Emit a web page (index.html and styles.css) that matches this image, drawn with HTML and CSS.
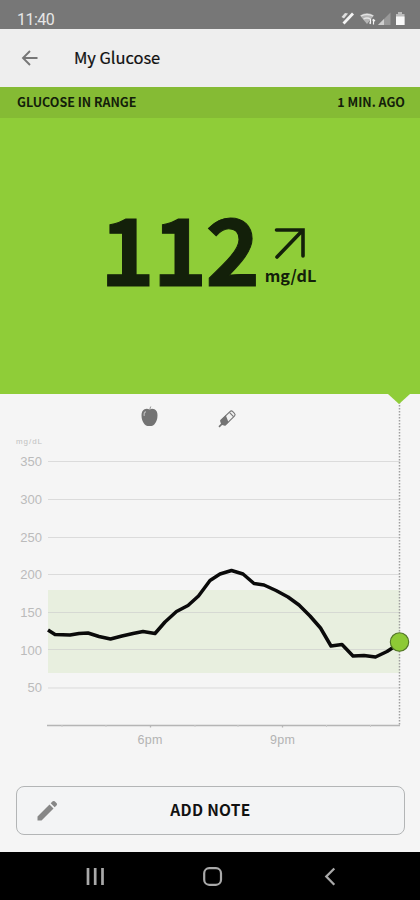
FILE: index.html
```
<!DOCTYPE html>
<html lang="en">
<head>
<meta charset="utf-8">
<meta name="viewport" content="width=device-width, initial-scale=1">
<title>My Glucose</title>
<link rel="stylesheet" href="styles.css">
</head>
<body>
<div class="screen">
  <header class="status">
    <span class="clock">11:40</span>
    <svg class="status-icons" width="68" height="16" viewBox="340 10 68 16">
      <path d="M343.500 23.500L353 13.500" stroke="#f4f4f4" stroke-width="2.800"/>
      <path d="M341.500 17l3.500-4 3 .5-4 5z" fill="#dedede"/>
      <path d="M360 15.500q7-4.500 14 0l-7 8.500z" fill="#b5b5b5"/>
      <path d="M361 16q6-3 12 0M363.500 19q3.500-2 7 0" fill="none" stroke="#e4e4e4" stroke-width="1.300"/>
      <path d="M370.500 19v4.500M373.500 24.500v-4.500M369.500 22.500l1 1.500M372.500 20.500l1-1 1.500 1.500" fill="none" stroke="#f4f4f4" stroke-width="1.200"/>
      <path d="M378 25L390.500 12.500V25z" fill="#999"/>
      <path d="M378 25l6-6v6z" fill="#cecece"/>
      <path d="M396 14h2v-2h4v2h2.500v11H396z" fill="#bbb"/>
      <path d="M396 16.500h8.500V25H396z" fill="#f8f8f8"/>
    </svg>
  </header>
  <nav class="appbar">
    <svg class="back" width="18" height="16" viewBox="0 0 18 16"><path d="M16.500 8H2M9 1L2 8l7 7" fill="none" stroke="#777" stroke-width="1.900"/></svg>
    <h1 class="title">My Glucose</h1>
  </nav>
  <section class="reading">
    <div class="range"><span class="range-text">GLUCOSE IN RANGE</span><span class="ago">1 MIN. AGO</span></div>
    <div class="value-row">
      <span class="value">112</span>
      <div class="side">
        <svg class="trend" width="34" height="34" viewBox="0 0 34 34"><path d="M3.500 4H30V30M29.500 4.500L4 31" fill="none" stroke="#13200a" stroke-width="3.600" stroke-linecap="round"/></svg>
        <span class="unit">mg/dL</span>
      </div>
    </div>
  </section>
  <svg class="chart" width="420" height="376" viewBox="0 394 420 376">
    <rect x="48" y="590" width="352" height="83" fill="#e8efdf"/>
    <path class="grid" d="M48 461.500H400M48 499.500H400M48 537.500H400M48 574.500H400M48 612.500H400M48 649.500H400M48 688H400"/>
    <path class="axis" d="M47 725.500H400M150.500 725v2.500M282.500 725v2.500"/>
    <path class="minor" d="M62 725v2M106 725v2M195 725v2M238 725v2M326.500 725v2M370.500 725v2"/>
    <path class="now" d="M399.500 402V726"/>
    <path d="M388 394H410L399 404z" fill="#8fcd38"/>
    <text class="unit-label" x="16" y="443.500" textLength="26">mg/dL</text>
    <g class="ylabels">
      <text x="42" y="466">350</text><text x="42" y="504">300</text><text x="42" y="541.500">250</text><text x="42" y="579">200</text><text x="42" y="617">150</text><text x="42" y="654.500">100</text><text x="42" y="692">50</text>
    </g>
    <text class="xlabel" x="150" y="744" textLength="25">6pm</text>
    <text class="xlabel" x="282.500" y="744" textLength="25">9pm</text>
    <path d="M144.500 409.300q2.500-1.300 5 .3 2.500-1.600 5-.3 3 1.700 3 6 0 5.500-3 9-1.500 1.700-3 1.700h-4q-1.500 0-3-1.700-3-3.500-3-9 0-4.300 3-6z" fill="#737373"/>
    <path d="M150 410q-.2-2 .8-3.500" fill="none" stroke="#929292"/>
    <path d="M144.200 416q-.6-3.500 1.600-4.500" fill="none" stroke="#bbb" stroke-width="1.100"/>
    <g transform="translate(227.500 418.400) rotate(-44)">
      <path d="M-6-3.200H6.500a2 2 0 0 1 2 2V1.200a2 2 0 0 1-2 2H-6z" fill="#f2f2f2" stroke="#777" stroke-width="1.100"/>
      <path d="M-7-3.500H1L-2 3.500H-7L-8.500 1H-12V-.6H-8.500z" fill="#737373"/>
      <path d="M5.500-3V3" stroke="#777" stroke-width="1.100"/>
    </g>
    <path class="line" d="M48 630L55 634.500L70 635L79 633.500L88 633L99 636.500L110.500 639L122 636L133 633.500L143 631.500L155 633.500L165 622L176.500 611.500L188 605.500L198.500 596L210 580.500L220 574L231.500 570.500L243 574L254 583.500L264 585L276 590.500L288 597L299 605L310 616L320.500 628L331 646L342 644.500L353 656L364 655.500L375.500 657L387 651.500L400 643"/>
    <circle cx="399.500" cy="642" r="9.200" fill="#8dc935" stroke="#527528" stroke-width="1.100"/>
  </svg>
  <div class="actions">
    <button class="note">
      <svg class="pencil" width="22" height="22" viewBox="0 0 22 22"><path d="M1.500 20.500v-4L13.500 4.500l4 4L5.500 20.500zM14.700 3.300l2-2q1-.8 2 0l2 2q.8 1 0 2l-2 2z" fill="#878787"/></svg>
      <span class="note-text">ADD NOTE</span>
    </button>
  </div>
  <footer class="sysnav">
    <svg width="420" height="48" viewBox="0 852 420 48" fill="none" stroke="#a9a9a9">
      <path d="M88 868v17M95.200 868v17M102.500 868v17" stroke-width="2.700"/>
      <rect x="204.200" y="868.200" width="16.800" height="16.600" rx="5" stroke-width="2.200"/>
      <path d="M334.300 868.500l-8 8 8 8.200" stroke-width="2.300"/>
    </svg>
  </footer>
</div>
</body>
</html>
```
FILE: styles.css
```
* { box-sizing: border-box; }
body { margin: 0; background: #f5f5f5; font-family: "Noto Sans CJK SC", "Noto Sans", sans-serif; }
.screen { width: 420px; height: 900px; display: flex; flex-direction: column; overflow: hidden; background: #f5f5f5; }
svg { display: block; flex: none; }
.status { height: 29px; flex: none; background: #777; display: flex; justify-content: space-between; align-items: flex-end; padding: 0 12px 3px 17px; }
.clock { font: 16px/13px Roboto, sans-serif; color: #e6e6e6; letter-spacing: -0.5px; }
.appbar { height: 58px; flex: none; background: #eee; display: flex; align-items: center; padding-left: 21px; }
.title { margin: 0 0 2px 35px; font-size: 16.500px; line-height: 24px; font-weight: 400; letter-spacing: -.05px; color: #111; -webkit-text-stroke: .2px #111; }
.reading { height: 307px; flex: none; background: #8fcd38; }
.range { height: 31px; background: #85bb34; display: flex; align-items: center; justify-content: space-between; padding: 0 15px 2px 17px; font-size: 12.500px; font-weight: 700; color: #13200a; }
.value-row { display: flex; align-items: flex-start; padding: 88px 0 0 100px; color: #13200a; }
.value { font-size: 93px; line-height: 80px; font-weight: 700; letter-spacing: -2.300px; -webkit-text-stroke: 1px #13200a; }
.side { display: flex; flex-direction: column; padding: 20px 0 0 7px; }
.trend { margin-left: 8px; }
.unit { margin-top: 3px; font-size: 16.200px; line-height: 24px; font-weight: 700; }
.grid { fill: none; stroke: #ccc; stroke-opacity: .65; stroke-width: 1; }
.axis { fill: none; stroke: #b5b5b5; stroke-width: 1.300; }
.minor { stroke: #ccc; }
.now { fill: none; stroke: #a0a0a0; stroke-width: 1.500; stroke-dasharray: 1.500 1.500; }
.unit-label { font: 8px "Liberation Sans", sans-serif; fill: #c1c1c1; }
.ylabels text { font: 13px "Liberation Sans", sans-serif; fill: #bbb; text-anchor: end; }
.xlabel { font: 12.500px "Liberation Sans", sans-serif; fill: #b3b3b3; text-anchor: middle; }
.line { fill: none; stroke: #0a0a0a; stroke-width: 3.500; stroke-linejoin: round; }
.actions { height: 82px; flex: none; padding: 16px 15px 0 16px; }
.note { width: 100%; height: 49px; display: grid; grid-template-columns: 40px 1fr 40px; align-items: center; padding: 0; border: 1.500px solid #b3b5b6; border-radius: 8px; background: #f3f4f5; font: 700 15.500px/24px "Noto Sans CJK SC", sans-serif; color: #111; }
.pencil { margin-left: 19px; }
.note-text { text-align: center; letter-spacing: .3px; padding-bottom: 4px; }
.sysnav { height: 48px; flex: none; background: #000; }
```
